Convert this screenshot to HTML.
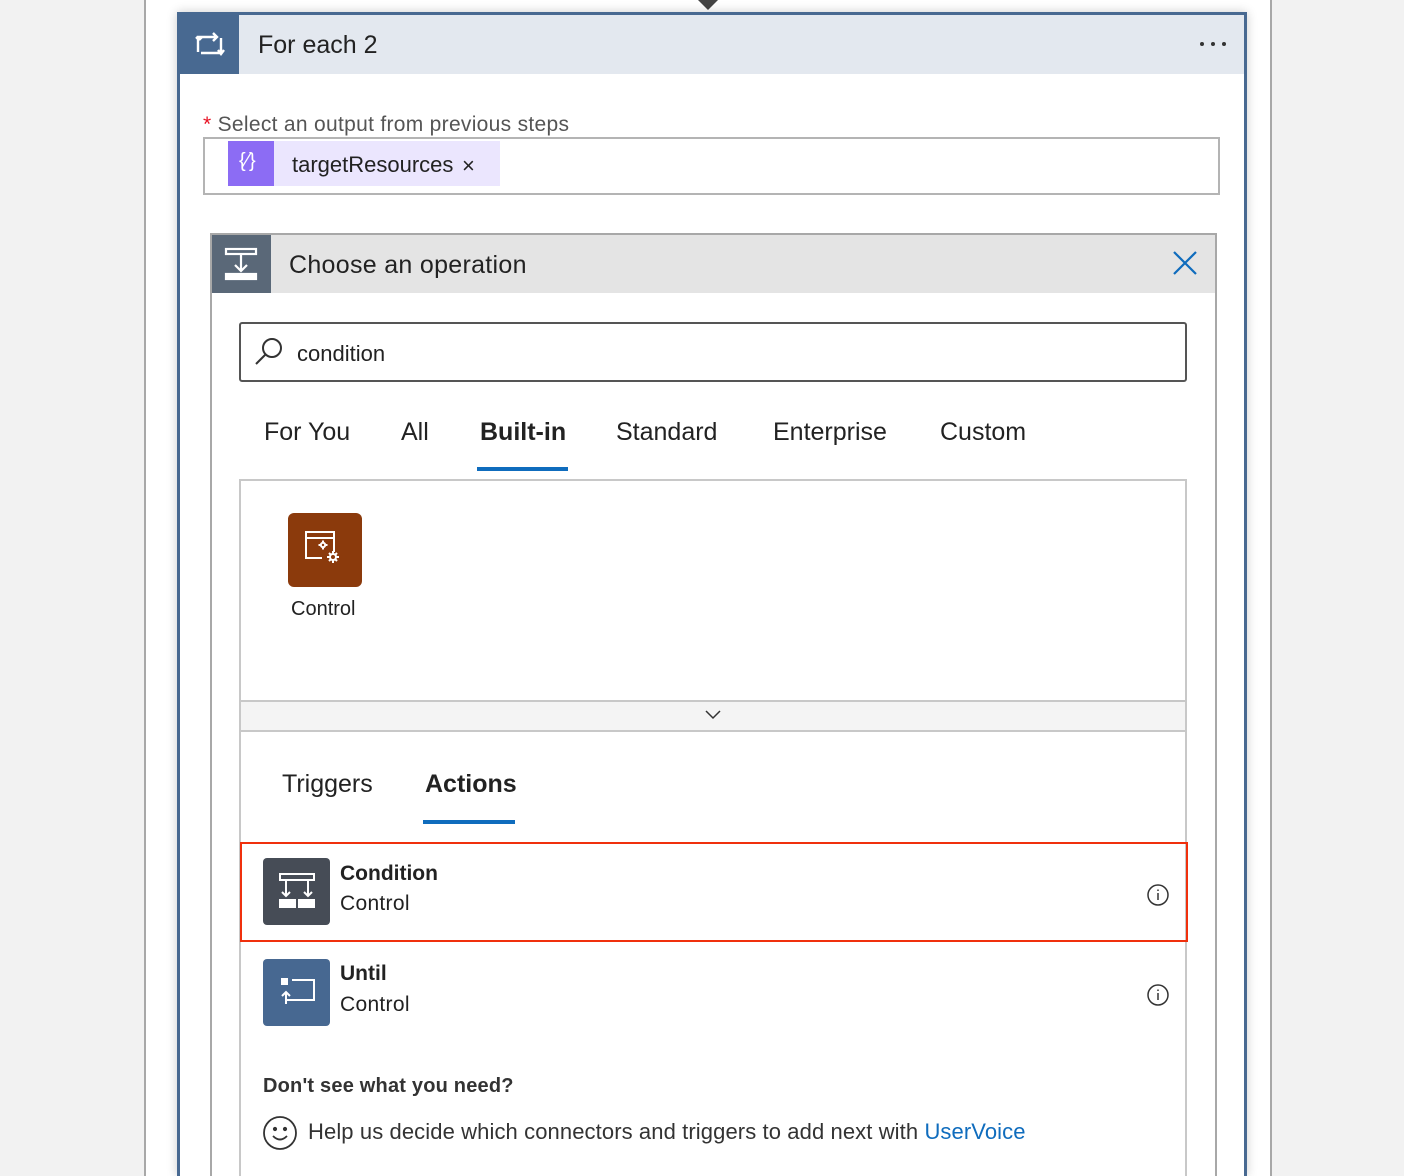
<!DOCTYPE html>
<html><head><meta charset="utf-8"><style>
*{box-sizing:border-box;margin:0;padding:0}
html{width:1404px;height:1176px;overflow:hidden}
body{width:1404px;height:1176px;overflow:hidden;background:#f2f2f2;font-family:"Liberation Sans",sans-serif;position:relative;color:#222}
.a{position:absolute}
</style></head><body>
<div class="a" style="left:144px;top:0;width:1128px;height:1176px;background:#fff;border-left:2px solid #a8a8a8;border-right:2px solid #a8a8a8"></div>
<svg class="a" style="left:696px;top:0" width="24" height="12"><path d="M2 0 L12 10 L22 0 Z" fill="#444"/></svg>
<div class="a" style="left:177px;top:12px;width:1070px;height:1164px;border:3px solid #486991;border-bottom:none;background:#fff;box-shadow:0 0 10px rgba(0,0,0,.2)"></div>
<div class="a" style="left:180px;top:15px;width:1064px;height:59px;background:#e3e8ef"></div>
<div class="a" style="left:180px;top:15px;width:59px;height:59px;background:#486991"></div>
<svg class="a" style="left:193px;top:30px" width="34" height="30" fill="none" stroke="#fff" stroke-width="2.4">
<path d="M5 22 V7 H24 M20 3 L24 7 L20 11"/><path d="M6 10 L3 7 M6 10 L9 7"/>
<path d="M28 8 V23 H8"/><path d="M25 20 L28 24 L31 20"/></svg>
<div class="a" style="left:258px;top:31px;font-size:25px;color:#222">For each 2</div>
<div class="a" style="left:1198px;top:42px;width:30px;height:4px">
<span class="a" style="left:2px;width:4px;height:4px;border-radius:2px;background:#333"></span>
<span class="a" style="left:13px;width:4px;height:4px;border-radius:2px;background:#333"></span>
<span class="a" style="left:24px;width:4px;height:4px;border-radius:2px;background:#333"></span></div>
<div class="a" style="left:203px;top:113px;font-size:21px;color:#555;letter-spacing:.3px"><span style="color:#e81123">*</span> Select an output from previous steps</div>
<div class="a" style="left:203px;top:137px;width:1017px;height:58px;border:2px solid #b4b4b4"></div>
<div class="a" style="left:228px;top:141px;width:272px;height:45px;background:#ebe6fe"></div>
<div class="a" style="left:228px;top:141px;width:46px;height:45px;background:#8c6cf4"></div>
<div class="a" style="left:239px;top:150px;font-size:20px;color:#fff">{⁄}</div>
<div class="a" style="left:292px;top:152px;font-size:22px;color:#222">targetResources</div>
<div class="a" style="left:462px;top:153px;font-size:22px;color:#222">×</div>
<div class="a" style="left:210px;top:233px;width:1007px;height:960px;border:2px solid #a8a8a8;background:#fff"></div>
<div class="a" style="left:212px;top:235px;width:1003px;height:58px;background:#e4e4e4"></div>
<div class="a" style="left:212px;top:235px;width:59px;height:58px;background:#5a6878"></div>
<svg class="a" style="left:222px;top:246px" width="38" height="36" fill="none" stroke="#fff" stroke-width="2.2">
<rect x="4" y="3" width="30" height="5"/><path d="M19 8 V25 M13 19 L19 25 L25 19"/><rect x="4" y="28" width="30" height="5" fill="#fff"/></svg>
<div class="a" style="left:289px;top:251px;font-size:25px;color:#222;letter-spacing:.3px">Choose an operation</div>
<svg class="a" style="left:1172px;top:250px" width="26" height="26" stroke="#0f6cbd" stroke-width="2.2"><path d="M2 2 L24 24 M24 2 L2 24"/></svg>
<div class="a" style="left:239px;top:322px;width:948px;height:60px;border:2px solid #555;border-radius:3px"></div>
<svg class="a" style="left:253px;top:336px" width="32" height="32" fill="none" stroke="#333" stroke-width="2"><circle cx="19" cy="12" r="9"/><path d="M12.5 18.5 L3 28"/></svg>
<div class="a" style="left:297px;top:341px;font-size:22px;color:#222">condition</div>
<div class="a" style="left:264px;top:418px;font-size:25px;color:#222">For You</div>
<div class="a" style="left:401px;top:418px;font-size:25px;color:#222">All</div>
<div class="a" style="left:480px;top:418px;font-size:25px;font-weight:bold;color:#222">Built-in</div>
<div class="a" style="left:477px;top:467px;width:91px;height:4px;background:#0f6cbd"></div>
<div class="a" style="left:616px;top:418px;font-size:25px;color:#222">Standard</div>
<div class="a" style="left:773px;top:418px;font-size:25px;color:#222">Enterprise</div>
<div class="a" style="left:940px;top:418px;font-size:25px;color:#222">Custom</div>
<div class="a" style="left:239px;top:479px;width:948px;height:720px;border:2px solid #c8c8c8"></div>
<div class="a" style="left:288px;top:513px;width:74px;height:74px;background:#8b3a0c;border-radius:6px"></div>
<svg class="a" style="left:304px;top:530px" width="42" height="40" fill="none" stroke="#fff" stroke-width="2">
<path d="M30 22 V2 H2 V28 H18 M2 8 H30"/>
<circle cx="19" cy="15" r="2.2"/><path d="M19 10.5 V12.5 M19 17.5 V19.5 M14.5 15 H16.5 M21.5 15 H23.5"/>
<circle cx="29" cy="27" r="3"/><path d="M29 21 V24 M29 30 V33 M23 27 H26 M32 27 H35 M25 23 L27 25 M31 29 L33 31 M33 23 L31 25 M27 29 L25 31"/></svg>
<div class="a" style="left:291px;top:598px;font-size:20px;color:#222">Control</div>
<div class="a" style="left:241px;top:700px;width:944px;height:32px;background:#f4f4f4;border-top:2px solid #c8c8c8;border-bottom:2px solid #c8c8c8"></div>
<svg class="a" style="left:704px;top:709px" width="18" height="12" fill="none" stroke="#333" stroke-width="1.5"><path d="M2 2 L9 9 L16 2"/></svg>
<div class="a" style="left:282px;top:770px;font-size:25px;color:#222">Triggers</div>
<div class="a" style="left:425px;top:770px;font-size:25px;font-weight:bold;color:#222">Actions</div>
<div class="a" style="left:423px;top:820px;width:92px;height:4px;background:#0f6cbd"></div>
<div class="a" style="left:240px;top:842px;width:948px;height:100px;border:2px solid #f0300d"></div>
<div class="a" style="left:263px;top:858px;width:67px;height:67px;background:#464c56;border-radius:4px"></div>
<svg class="a" style="left:276px;top:872px" width="42" height="40" fill="none" stroke="#fff" stroke-width="2"><rect x="4" y="2" width="34" height="6"/><path d="M10 8 V24 M6 20 L10 24 L14 20 M32 8 V24 M28 20 L32 24 L36 20"/><rect x="4" y="28" width="15" height="7" fill="#fff"/><rect x="23" y="28" width="15" height="7" fill="#fff"/></svg>
<div class="a" style="left:340px;top:862px;font-size:21px;font-weight:bold;color:#222">Condition</div>
<div class="a" style="left:340px;top:892px;font-size:21px;color:#222;letter-spacing:.3px">Control</div>
<svg class="a" style="left:1146px;top:883px" width="24" height="24" fill="none" stroke="#333" stroke-width="1.5"><circle cx="12" cy="12" r="10"/><path d="M12 10 V17 M12 6.5 V8"/></svg>
<div class="a" style="left:263px;top:959px;width:67px;height:67px;background:#476891;border-radius:4px"></div>
<svg class="a" style="left:278px;top:974px" width="40" height="36" fill="none" stroke="#fff" stroke-width="2"><rect x="3" y="4" width="7" height="7" fill="#fff" stroke="none"/><path d="M14 6 H36 V26 H8 M8 30 V18 M4 22 L8 18 L12 22"/></svg>
<div class="a" style="left:340px;top:962px;font-size:21px;font-weight:bold;color:#222">Until</div>
<div class="a" style="left:340px;top:993px;font-size:21px;color:#222;letter-spacing:.3px">Control</div>
<svg class="a" style="left:1146px;top:983px" width="24" height="24" fill="none" stroke="#333" stroke-width="1.5"><circle cx="12" cy="12" r="10"/><path d="M12 10 V17 M12 6.5 V8"/></svg>
<div class="a" style="left:263px;top:1075px;font-size:20px;font-weight:bold;color:#333;letter-spacing:.2px">Don't see what you need?</div>
<svg class="a" style="left:262px;top:1115px" width="36" height="36" fill="none" stroke="#333" stroke-width="1.8"><circle cx="18" cy="18" r="16"/><circle cx="13" cy="14" r="1.2" fill="#333"/><circle cx="23" cy="14" r="1.2" fill="#333"/><path d="M11 21 Q18 28 25 21"/></svg>
<div class="a" style="left:308px;top:1119px;font-size:22px;color:#333;letter-spacing:.1px;white-space:nowrap">Help us decide which connectors and triggers to add next with <span style="color:#0f6cbd">UserVoice</span></div>
</body></html>
